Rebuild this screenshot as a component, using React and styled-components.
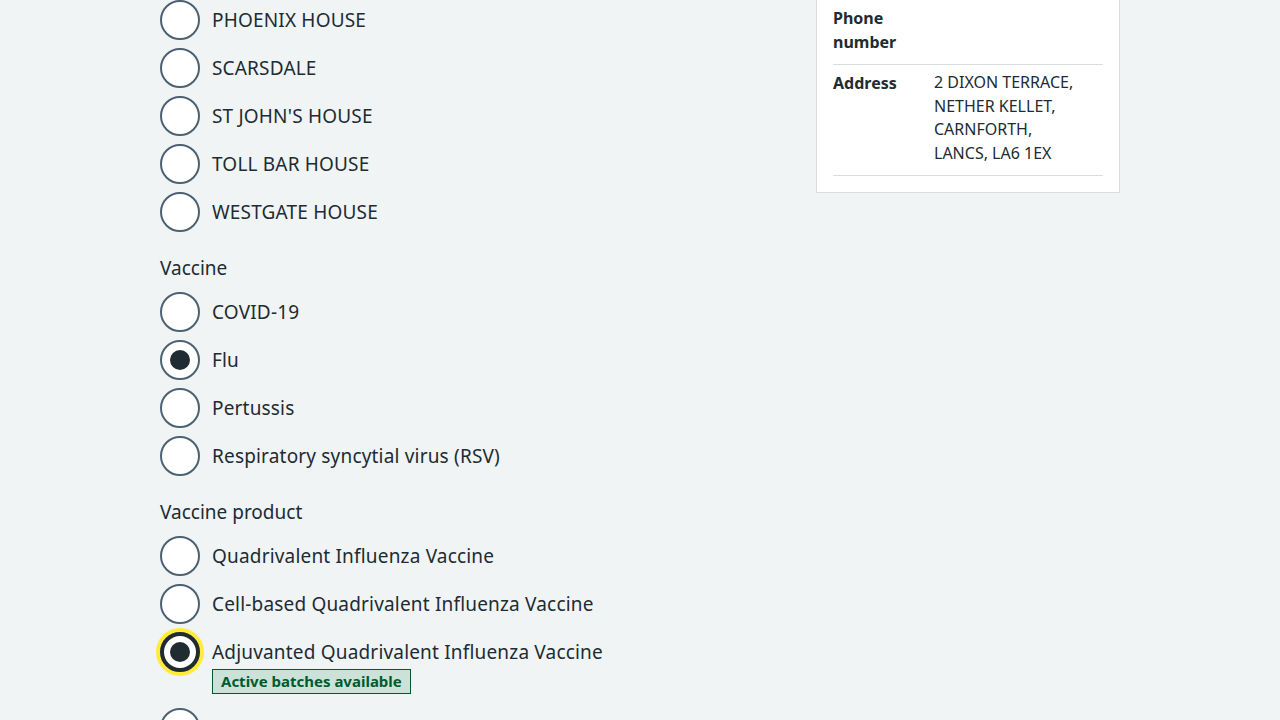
import styled, { createGlobalStyle } from 'styled-components';

const GlobalStyle = createGlobalStyle`
  html, body {
    margin: 0;
    padding: 0;
    background: #f0f4f5;
    color: #212b32;
    font-family: 'Noto Sans', Arial, sans-serif;
    -webkit-font-smoothing: antialiased;
  }
`;

const Container = styled.div`
  width: 960px;
  margin: 0 auto;
  display: grid;
  grid-template-columns: 640px 304px;
  column-gap: 16px;
  align-items: start;
`;

const Column = styled.div`
  display: flex;
  flex-direction: column;
`;

const Fieldset = styled.fieldset`
  border: 0;
  margin: 0;
  padding: 0;
  min-width: 0;
`;

const Legend = styled.legend`
  padding: 0;
  margin: 14px 0 10px;
  font-size: 19px;
  line-height: 28px;
  float: left;
  width: 100%;
`;

const RadioList = styled.div`
  clear: both;
  display: flex;
  flex-direction: column;
`;

const RadioItem = styled.label`
  display: flex;
  align-items: flex-start;
  gap: 12px;
  margin-bottom: 8px;
  cursor: pointer;
`;

const Circle = styled.span`
  flex: 0 0 40px;
  width: 40px;
  height: 40px;
  box-sizing: border-box;
  border-radius: 50%;
  background: #fff;
  border: ${({ $focused }) => ($focused ? '4px solid #212b32' : '2px solid #4c6272')};
  box-shadow: ${({ $focused }) => ($focused ? '0 0 0 4px #ffeb3b' : 'none')};
  display: flex;
  align-items: center;
  justify-content: center;

  &::after {
    content: '';
    display: ${({ $checked }) => ($checked ? 'block' : 'none')};
    width: 20px;
    height: 20px;
    border-radius: 50%;
    background: #212b32;
  }
`;

const LabelBlock = styled.span`
  display: flex;
  flex-direction: column;
  align-items: flex-start;
  padding: 6px 0 ${({ $tag }) => ($tag ? '6px' : '0')};
`;

const LabelText = styled.span`
  font-size: 19px;
  line-height: 28px;
  letter-spacing: 0.18px;
`;

const Tag = styled.strong`
  margin-top: 3px;
  border: 1px solid #005a30;
  background: #cce2d8;
  color: #005a30;
  font-size: 15px;
  line-height: 23px;
  font-weight: 700;
  padding: 0 8px;
`;

const Card = styled.dl`
  margin: 0;
  background: #fff;
  border: 1px solid #d8dde0;
  border-top: 0;
  padding: 0 16px 16px;
`;

const SummaryRow = styled.div`
  display: grid;
  grid-template-columns: 101px 1fr;
  border-bottom: 1px solid #d8dde0;
  padding: 6px 0 10px;
  font-size: 16px;
  line-height: 24px;
`;

const Key = styled.dt`
  margin: 0;
  font-weight: 700;
  padding-right: 24px;
`;

const Value = styled.dd`
  margin: 0;
  line-height: 23.5px;
`;

const sites = ['PHOENIX HOUSE', 'SCARSDALE', "ST JOHN'S HOUSE", 'TOLL BAR HOUSE', 'WESTGATE HOUSE'];
const vaccines = ['COVID-19', 'Flu', 'Pertussis', 'Respiratory syncytial virus (RSV)'];
const products = [
  { name: 'Quadrivalent Influenza Vaccine' },
  { name: 'Cell-based Quadrivalent Influenza Vaccine' },
  { name: 'Adjuvanted Quadrivalent Influenza Vaccine', checked: true, focused: true, tag: 'Active batches available' },
  { name: 'Afluria Quadrivalent Influenza Vaccine' },
];

const Radio = ({ label, checked, focused, tag }) => (
  <RadioItem>
    <Circle $checked={checked} $focused={focused} />
    <LabelBlock $tag={!!tag}>
      <LabelText>{label}</LabelText>
      {tag && <Tag>{tag}</Tag>}
    </LabelBlock>
  </RadioItem>
);

const App = () => (
  <>
    <GlobalStyle />
    <Container>
      <Column>
        <RadioList>
          {sites.map((s) => (
            <Radio key={s} label={s} />
          ))}
        </RadioList>
        <Fieldset>
          <Legend>Vaccine</Legend>
          <RadioList>
            {vaccines.map((v) => (
              <Radio key={v} label={v} checked={v === 'Flu'} />
            ))}
          </RadioList>
        </Fieldset>
        <Fieldset>
          <Legend>Vaccine product</Legend>
          <RadioList>
            {products.map((p) => (
              <Radio key={p.name} label={p.name} checked={p.checked} focused={p.focused} tag={p.tag} />
            ))}
          </RadioList>
        </Fieldset>
      </Column>
      <Card>
        <SummaryRow>
          <Key>Phone number</Key>
          <Value />
        </SummaryRow>
        <SummaryRow>
          <Key>Address</Key>
          <Value>
            2 DIXON TERRACE,
            <br />
            NETHER KELLET,
            <br />
            CARNFORTH,
            <br />
            LANCS, LA6 1EX
          </Value>
        </SummaryRow>
      </Card>
    </Container>
  </>
);

export default App;
